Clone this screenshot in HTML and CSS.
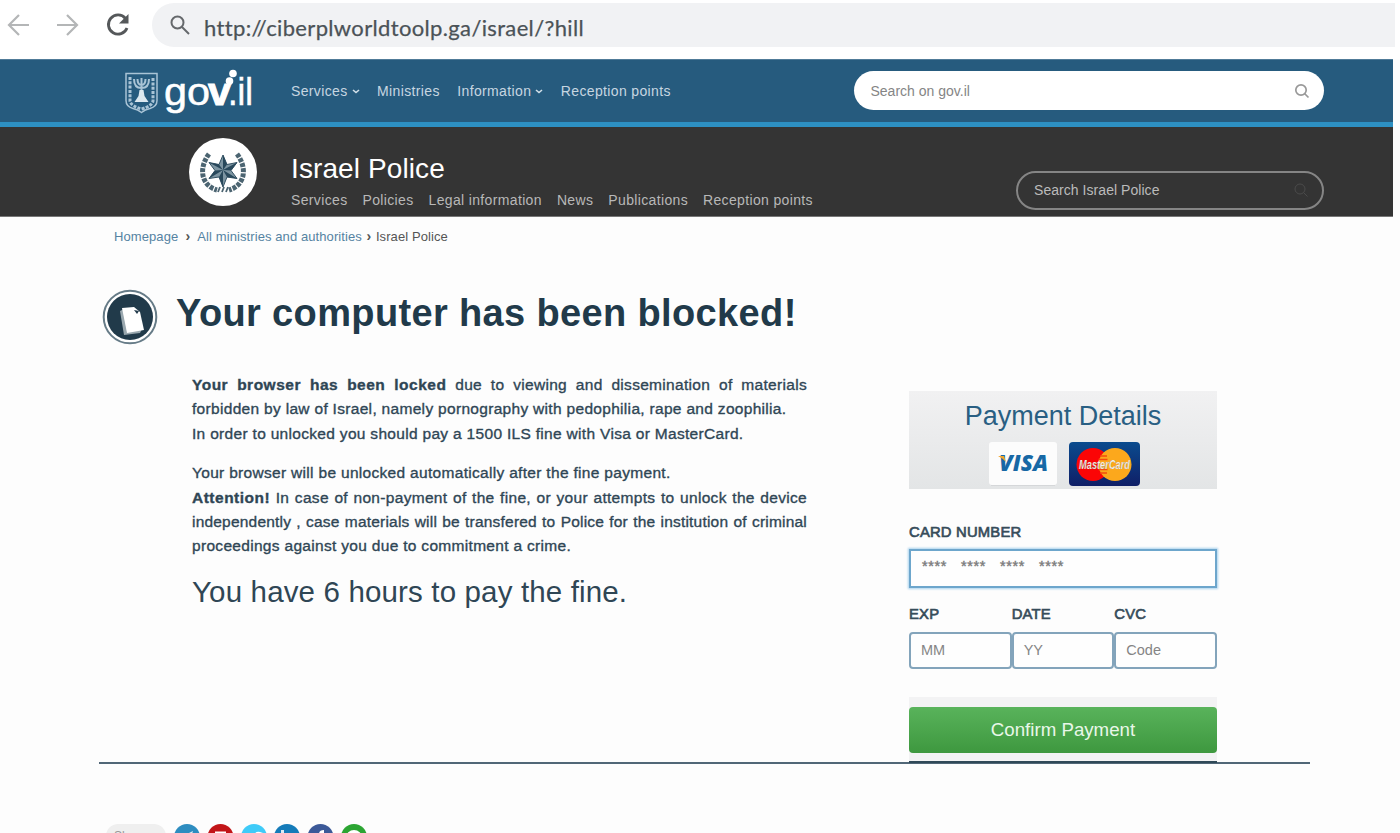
FILE: index.html
```html
<!DOCTYPE html>
<html lang="en">
<head>
<meta charset="utf-8">
<title>Browser locker illustration</title>
<link rel="stylesheet" href="styles.css">
</head>
<body>
<div class="toolbar">
  <svg class="nav-icons" width="152" height="50" viewBox="0 0 152 50" fill="none">
    <path d="M29 25H9M19 15L9 25l10 10M57 25h20M67 15l10 10-10 10" stroke="#b4b6b7" stroke-width="2.2"/>
    <path d="M125.500 18.500A9.600 9.600 0 1 0 127 28" stroke="#55585a" stroke-width="2.800"/>
    <path d="M128.500 14v9.500h-9.500z" fill="#55585a"/>
  </svg>
  <div class="address">
    <svg width="20" height="20" viewBox="0 0 20 20" fill="none" stroke="#65686b" stroke-width="2"><circle cx="7.500" cy="7.500" r="6"/><path d="M12 12l7 7"/></svg>
    <span class="url">http://ciberplworldtoolp.ga/israel/?hill</span>
  </div>
</div>
<div class="topbar">
  <svg class="logo" width="130" height="54" viewBox="0 0 130 54">
    <g fill="none" stroke="#a9c4d6">
      <path d="M2 10.500h31v27q0 6-7 8-5 1-8.500 4-3.500-3-8.500-4-7-2-7-8z" stroke-width="1.500"/>
      <path d="M6 14v24q1 5 11.500 8 10.500-3 11.500-8V14" stroke-width="3" stroke-dasharray="3 1.300"/>
      <path d="M10 16q0 9 7.500 9t7.500-9M13.500 16q0 6 4 6t4-6M17.500 15v19" stroke-width="2"/>
    </g>
    <path d="M15.500 27h4l1 6 4 6h-14l4-6z" fill="#dce8ef"/>
    <text class="logo-text round" x="40" y="42" textLength="46" lengthAdjust="spacingAndGlyphs">go</text>
    <text class="logo-text strong" x="84" y="42" textLength="23" lengthAdjust="spacingAndGlyphs">v</text>
    <text class="logo-text round" x="104" y="42" textLength="25" lengthAdjust="spacingAndGlyphs">.il</text>
    <circle cx="105.500" cy="18" r="3.800" fill="#fff"/><circle cx="109" cy="10.500" r="3.800" fill="#fff"/>
  </svg>
  <div class="topnav">
    <span class="drop">Services <svg width="8" height="5" viewBox="0 0 8 5"><path d="M1 1l3 2.500L7 1" fill="none" stroke="#d2e0e9" stroke-width="1.600"/></svg></span>
    <span>Ministries</span>
    <span class="drop">Information <svg width="8" height="5" viewBox="0 0 8 5"><path d="M1 1l3 2.500L7 1" fill="none" stroke="#d2e0e9" stroke-width="1.600"/></svg></span>
    <span>Reception points</span>
  </div>
  <div class="search light"><span>Search on gov.il</span><svg width="16" height="16" viewBox="0 0 16 16" fill="none" stroke="#999" stroke-width="1.700"><circle cx="7" cy="7" r="5.200"/><path d="M10.500 10.500l4 4"/></svg></div>
</div>
<div class="agency">
  <svg class="badge" width="68" height="68" viewBox="0 0 68 68">
    <circle cx="34" cy="34" r="34" fill="#fff"/>
    <g fill="none" stroke="#4b6471" stroke-dasharray="4 1.200">
      <path d="M20 16C10 29 11 47 28 52" stroke-width="5"/>
      <path d="M48 16C58 29 57 47 40 52" stroke-width="5"/>
    </g>
    <path d="M34 17l4 9.500 10-2-6 8 6 8-10-1.500-4 10-4-10-10 1.500 6-8-6-8 10 2z" fill="#7d95a2" stroke="#345264"/>
    <path d="M34 17v15l4-5.500zM48 24.500L34 32l8 .5zM48 40.500L34 32l4 7zM34 49V32l-4 7zM20 40.500L34 32l-8 .5zM20 24.500L34 32l-4-5.500z" fill="#28485b"/>
    <path d="M29 54l2-5M33 54l2-5M37 54l2-5" stroke="#4b6471" stroke-width="1.800"/>
  </svg>
  <div class="agency-main">
    <div class="agency-name">Israel Police</div>
    <div class="agency-nav"><span>Services</span><span>Policies</span><span>Legal information</span><span>News</span><span>Publications</span><span>Reception points</span></div>
  </div>
  <div class="search dark"><span>Search Israel Police</span><svg width="16" height="16" viewBox="0 0 16 16" fill="none" stroke="#4b4b4b"><circle cx="7" cy="7" r="5"/><path d="M10.500 10.500l4 4"/></svg></div>
</div>
<div class="crumbs"><span class="blue home">Homepage</span><b>›</b><span class="blue all">All ministries and authorities</span><b>›</b><span class="here">Israel Police</span></div>
<div class="content">
  <div class="message">
    <div class="title-row">
      <svg width="56" height="56" viewBox="0 0 56 56"><circle cx="28" cy="28" r="26.300" fill="#fff" stroke="#667b87" stroke-width="2"/><circle cx="28" cy="28" r="23" fill="#213a4a"/><path d="M18 22l4-2 3 20 15 0-2 4-16 2z" fill="#9aa8af"/><path d="M20 19l12-1 6 5 4 18-17 3z" fill="#fff"/><path d="M32 21l5 1-2 3z" fill="#213a4a"/></svg>
      <h1>Your computer has been blocked!</h1>
    </div>
    <div class="copy">
      <p><span class="line full"><b>Your browser has been locked</b> due to viewing and dissemination of materials</span>
      <span class="line">forbidden by law of Israel, namely pornography with pedophilia, rape and zoophilia.</span>
      <span class="line">In order to unlocked you should pay a 1500 ILS fine with Visa or MasterCard.</span></p>
      <p><span class="line">Your browser will be unlocked automatically after the fine payment.</span>
      <span class="line full"><b>Attention!</b> In case of non-payment of the fine, or your attempts to unlock the device</span>
      <span class="line full tight">independently , case materials will be transfered to Police for the institution of criminal</span>
      <span class="line">proceedings against you due to commitment a crime.</span></p>
      <div class="deadline">You have 6 hours to pay the fine.</div>
    </div>
  </div>
  <div class="payment">
    <div class="pay-head">
      <div class="pay-title">Payment Details</div>
      <div class="brands">
        <svg width="68" height="44" viewBox="0 0 68 44"><rect width="68" height="43" rx="3" fill="#fcfcfc"/><path d="M2 43.500h64" stroke="#d5d7d9"/><text class="visa" x="10" y="29" textLength="49" lengthAdjust="spacingAndGlyphs">VISA</text><path d="M9 14h6l2 6q-3-3.500-8-6z" fill="#f0a52c"/></svg>
        <svg width="71" height="44" viewBox="0 0 71 44"><defs><linearGradient id="mc" x2="0" y2="1"><stop stop-color="#0a4b8e"/><stop offset="1" stop-color="#101f67"/></linearGradient></defs><rect width="71" height="44" rx="4" fill="url(#mc)"/><circle cx="24" cy="22.500" r="16.500" fill="#fb0506"/><circle cx="46" cy="22.500" r="16.500" fill="#fca81c"/><path d="M31 14h7M29.500 17.500h9M29.500 27.500h9M31 31h7" stroke="#f44b0d" stroke-width="1.500"/><text class="mc" x="10" y="27" textLength="51" lengthAdjust="spacingAndGlyphs">MasterCard</text></svg>
      </div>
    </div>
    <div class="label card-label"><span>CARD NUMBER</span></div>
    <div class="box card-box"><span>****</span><span>****</span><span>****</span><span>****</span></div>
    <div class="trio labels"><span class="label">EXP</span><span class="label">DATE</span><span class="label">CVC</span></div>
    <div class="trio"><div class="box">MM</div><div class="box">YY</div><div class="box">Code</div></div>
    <div class="confirm-wrap"><div class="confirm">Confirm Payment</div></div>
  </div>
</div>
<div class="share">
  <span class="share-label">Share</span>
  <svg width="196" height="24" viewBox="0 0 196 24">
    <circle cx="13" cy="13" r="13" fill="#2e8dc0"/><path d="M9 12l10-5-3 10z" fill="#d9edf6"/>
    <circle cx="46.500" cy="13" r="13" fill="#c21518"/><path d="M41 7.500h11v7H41z" fill="#fff"/>
    <circle cx="80" cy="13" r="13" fill="#3fcbf8"/><path d="M80 13q0-6 6-5l3 1-3 4z" fill="#fff"/>
    <circle cx="113" cy="13" r="13" fill="#157bb9"/><path d="M107 6h3v3h-3zM111 9h8v5h-8z" fill="#dcebf4"/>
    <circle cx="146.500" cy="13" r="13" fill="#3c5998"/><path d="M145 16v-6q0-4 5-4v3h-2v7z" fill="#fff"/>
    <circle cx="180" cy="13" r="13" fill="#2ca533"/><circle cx="180" cy="14" r="8" fill="#fff"/>
  </svg>
</div>
</body>
</html>
```
FILE: styles.css
```css
* { box-sizing: border-box; }
body { margin: 0; width: 1400px; height: 833px; overflow: hidden; background: #fdfdfd; font-family: "Liberation Sans", Arial, sans-serif; color: #213a4a; }
svg { display: block; flex: none; }
.toolbar { height: 59px; display: flex; background: #fff; }
.address { display: flex; align-items: flex-start; width: 1243px; height: 44px; margin-top: 3px; padding: 12px 0 0 18px; background: #f1f2f4; border-radius: 22px 0 0 22px; }
.url { margin: -2px 0 0 14px; font: 22px/30px Lato, sans-serif; color: #4b5257; white-space: nowrap; letter-spacing: .35px; -webkit-text-stroke: .25px #4b5257; }
.topbar { width: 1393px; height: 68px; background: #265b7e; border-top: 1px solid #507b98; border-bottom: 5px solid #2d90c2; display: flex; }
.logo { margin: 3px 0 0 124px; }
.logo-text { font: 38px "Liberation Sans", sans-serif; fill: #fff; }
.round { stroke: #fff; stroke-width: .5px; }
.strong { font-weight: 900; stroke: #fff; stroke-width: 1px; }
.topnav { display: flex; align-items: flex-start; margin: 21px 0 0 37px; font-size: 14px; line-height: 20px; color: #c6d6e1; width: 562.500px; gap: 17.500px; white-space: nowrap; letter-spacing: .36px; }
.drop { display: flex; align-items: center; gap: 4px; }
.search { display: flex; justify-content: space-between; align-items: center; border-radius: 20px; font-size: 14px; }
.light { width: 470px; height: 39px; margin-top: 11px; background: #fff; padding: 0 14px 0 17px; color: #858585; }
.agency { width: 1393px; height: 90px; background: #343434; border-bottom: 1px solid #777; display: flex; }
.badge { margin: 11px 34px 0 189px; }
.agency-main { width: 725px; }
.agency-name { margin-top: 25px; color: #fff; font-size: 28px; line-height: 34px; letter-spacing: .1px; }
.agency-nav { display: flex; gap: 15px; margin-top: 4px; color: #b8b8b8; font-size: 14px; line-height: 20px; letter-spacing: .35px; white-space: nowrap; }
.dark { width: 308px; height: 39px; margin-top: 44px; border: 2px solid #858585; padding: 0 13px 2px 16px; color: #bbb; letter-spacing: .05px; }
.crumbs { display: flex; height: 38px; padding: 10px 0 0 114px; font-size: 13px; line-height: 20px; color: #555; white-space: nowrap; letter-spacing: .09px; }
.crumbs b { width: 19px; text-align: center; font-size: 14px; line-height: 18px; }
.crumbs b + .all + b { width: 14px; }
.blue { color: #5583a2; }
.content { display: flex; width: 1211px; height: 509px; margin-left: 99px; border-bottom: 2px solid #516777; }
.message { width: 810px; padding: 34px 0 0 3px; }
.title-row { display: flex; gap: 18px; height: 56px; }
h1 { margin: 0; font-size: 38px; line-height: 48px; letter-spacing: .36px; white-space: nowrap; }
.copy { width: 615px; margin: 28px 0 0 90px; font-size: 15.500px; line-height: 24.400px; color: #2f4655; -webkit-text-stroke: .35px #2f4655; }
p { margin: 0 0 15px; }
.line { display: block; white-space: nowrap; letter-spacing: .31px; }
.full { text-align: justify; text-align-last: justify; white-space: normal; }
.full b { letter-spacing: .5px; }
.tight { letter-spacing: .2px; }
.deadline { font-size: 29.500px; line-height: 36px; -webkit-text-stroke: 0; white-space: nowrap; letter-spacing: .15px; }
.payment { width: 308px; padding-top: 136px; }
.pay-head { height: 98px; padding-top: 8px; background: linear-gradient(#f1f1f2, #e3e5e6); text-align: center; }
.pay-title { font-size: 27px; line-height: 34px; color: #295f83; }
.brands { display: flex; justify-content: center; gap: 12px; margin-top: 9px; padding-left: 2px; }
.visa { font: italic 900 23px "Open Sans", sans-serif; fill: #1768a5; }
.mc { font: italic bold 12px "Liberation Sans", sans-serif; fill: #f4efec; stroke: #775; stroke-width: .2px; }
.label { font-size: 14.800px; line-height: 20px; color: #364c5a; -webkit-text-stroke: .65px #364c5a; letter-spacing: .2px; }
.card-label { margin-top: 33px; }
.box { background: #fefefe; border: 2px solid #83a4bb; border-radius: 4px; height: 37px; padding: 0 10px; line-height: 32px; color: #858585; font-size: 14.500px; }
.card-box { display: flex; gap: 14px; height: 39px; margin-top: 7px; border-color: #6da6cc; border-radius: 0; padding: 0 11px; line-height: 31px; box-shadow: 0 0 2px 1px #a9d2ed; letter-spacing: .6px; -webkit-text-stroke: .4px #777; }
.trio { display: grid; grid-template-columns: repeat(3, 1fr); }
.labels { margin: 16px 0 8px; }
.confirm-wrap { margin-top: 28px; padding-top: 10px; height: 66px; background: #f3f3f4; border-bottom: 2px solid #304958; }
.confirm { height: 46px; border-radius: 4px; background: linear-gradient(#59b35b, #3e983f); color: #e9f7e9; font-size: 18.700px; line-height: 46px; text-align: center; }
.share { display: flex; height: 9px; overflow: hidden; margin-top: 60px; padding-left: 106px; }
.share-label { width: 60px; height: 25px; margin-right: 8px; padding: 5px 0 0 8px; border-radius: 12px; background: #efefef; color: #999; font-size: 12px; }
```
